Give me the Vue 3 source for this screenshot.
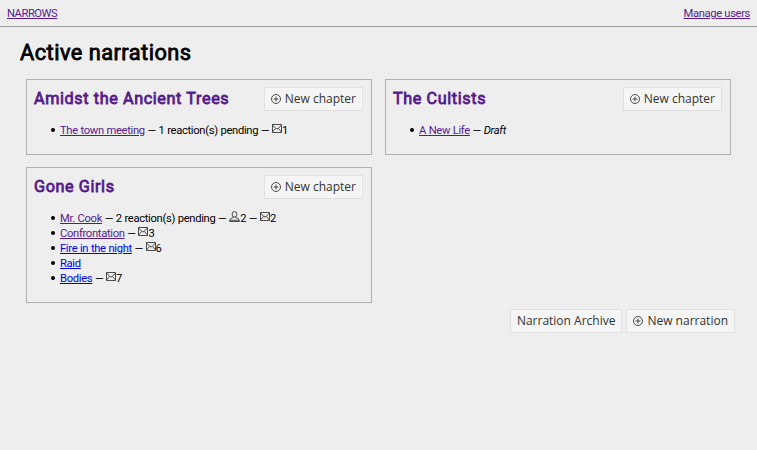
<script setup>
const narrations = [
  {
    title: 'Amidst the Ancient Trees',
    chapters: [{ title: 'The town meeting', visited: true, pending: 1, messages: 1 }],
  },
  {
    title: 'The Cultists',
    chapters: [{ title: 'A New Life', visited: true, draft: true }],
  },
  {
    title: 'Gone Girls',
    chapters: [
      { title: 'Mr. Cook', visited: true, pending: 2, people: 2, messages: 2 },
      { title: 'Confrontation', visited: true, messages: 3 },
      { title: 'Fire in the night', messages: 6 },
      { title: 'Raid' },
      { title: 'Bodies', messages: 7 },
    ],
  },
]
</script>

<template>
  <div class="page">
    <nav class="topbar">
      <a class="visited" href="#">NARROWS</a>
      <a class="visited" href="#">Manage users</a>
    </nav>
    <main>
      <h1>Active narrations</h1>
      <div class="grid">
        <section v-for="n in narrations" :key="n.title" class="card">
          <header>
            <h2>{{ n.title }}</h2>
            <button class="btn">
              <svg class="plus" viewBox="0 0 10 10"><circle cx="5" cy="5" r="4.5" /><path d="M5 2.5v5M2.5 5h5" /></svg>
              <span>New chapter</span>
            </button>
          </header>
          <ul>
            <li v-for="c in n.chapters" :key="c.title">
              <a href="#" :class="{ visited: c.visited }">{{ c.title }}</a>
              <span v-if="c.pending"> — {{ c.pending }} reaction(s) pending</span>
              <span v-if="c.people"> — <svg class="person" viewBox="0 0 11 11"><ellipse cx="5.5" cy="3.3" rx="2.4" ry="2.8" /><path d="M4.2 5.8v.7C3 7.2.6 7.4.6 9.8v.7h9.8v-.7C10.400 7.4 8 7.2 6.800 6.500v-.7M.8 9.300h9.400" /></svg>{{ c.people }}</span>
              <span v-if="c.messages"> — <svg class="mail" viewBox="0 0 10 9"><path d="M.5.5h9v8h-9zM.5 1 3.800 4.500Q5 5.300 6.200 4.500L9.500 1M.5 8 3.500 4.500M9.500 8 6.500 4.500" /></svg>{{ c.messages }}</span>
              <span v-if="c.draft"> — <em>Draft</em></span>
            </li>
          </ul>
        </section>
      </div>
      <div class="actions">
        <button class="btn"><span>Narration Archive</span></button>
        <button class="btn">
          <svg class="plus" viewBox="0 0 10 10"><circle cx="5" cy="5" r="4.5" /><path d="M5 2.5v5M2.5 5h5" /></svg>
          <span>New narration</span>
        </button>
      </div>
    </main>
  </div>
</template>

<style>
body {
  background: #eee;
}
</style>

<style scoped>
.page {
  font: 11.2px/15px Roboto, sans-serif;
  letter-spacing: -0.31px;
  word-spacing: 0.2px;
  color: #000;
}
.topbar {
  box-sizing: border-box;
  height: 27px;
  padding: 6px 7px 0;
  letter-spacing: -0.46px;
  display: flex;
  justify-content: space-between;
  border-bottom: 1px solid #999;
}
.topbar a + a {
  letter-spacing: -0.36px;
}
a {
  color: #00e;
}
a.visited {
  color: #551a8b;
}
main {
  padding: 12px 20px 0;
}
h1,
h2 {
  margin: 0;
  font-weight: 400;
  word-spacing: 0;
  -webkit-text-stroke: 0.8px currentColor;
}
h1 {
  font-size: 21.8px;
  line-height: 28px;
  letter-spacing: 0.46px;
}
.grid {
  display: grid;
  grid-template-columns: 346px 346px;
  gap: 12px 13px;
  padding: 12px 6px 0;
}
.card {
  box-sizing: border-box;
  border: 1px solid #b0b0b0;
  padding: 7px 8px 16px 7px;
}
.card header {
  display: flex;
  justify-content: space-between;
}
h2 {
  color: #551a8b;
  font-size: 16.2px;
  line-height: 23px;
  letter-spacing: 0.61px;
}
ul {
  margin: 12px 0 0;
  padding: 0 0 0 17px;
  list-style: none;
}
li {
  height: 15px;
  white-space: nowrap;
}
li::before {
  content: '';
  display: inline-block;
  width: 4px;
  height: 4px;
  margin-right: 5px;
  border-radius: 50%;
  background: #000;
  vertical-align: 2px;
}
.btn {
  box-sizing: border-box;
  height: 24px;
  padding: 0 6px;
  border: 1px solid #e0e0e0;
  background: #f5f5f5;
  color: #333;
  font: 12px/20px 'Open Sans', sans-serif;
  letter-spacing: 0;
  word-spacing: 0;
  display: flex;
  align-items: center;
  gap: 4px;
}
svg {
  fill: none;
  stroke: #222;
  stroke-width: 0.8;
}
.plus {
  width: 10px;
  height: 10px;
}
.mail {
  width: 10px;
  height: 9px;
  vertical-align: 1px;
}
.person {
  width: 11px;
  height: 11px;
}
.actions {
  display: flex;
  justify-content: flex-end;
  gap: 4px;
  padding: 6px 2px 0 0;
}
</style>
